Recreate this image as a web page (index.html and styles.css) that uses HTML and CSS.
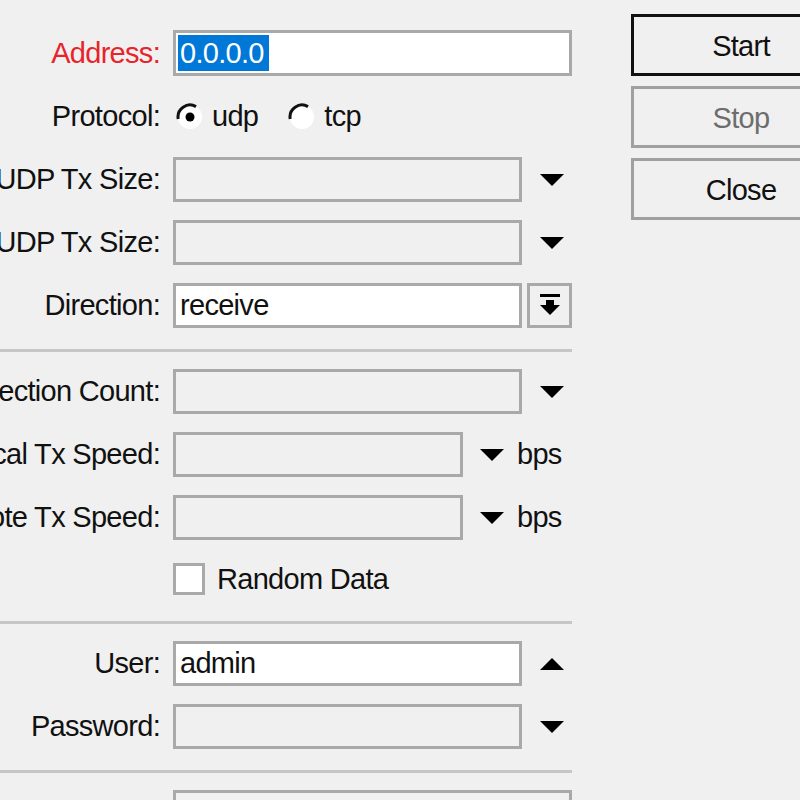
FILE: index.html
```html
<!DOCTYPE html>
<html>
<head>
<meta charset="utf-8">
<link rel="stylesheet" href="styles.css">
</head>
<body>
<div class="window">
  <div class="form">
    <div class="row row-first">
      <span class="lbl red">Address:</span>
      <div class="field white wide"><span class="sel">0.0.0.0</span></div>
    </div>
    <div class="row">
      <span class="lbl">Protocol:</span>
      <div class="radios">
        <span class="radio">
          <svg width="28" height="28" viewBox="0 0 28 28"><circle cx="14" cy="14" r="12" fill="#fff"/><path d="M2.2 16.1 A12 12 0 0 1 20 3.6" fill="none" stroke="#111" stroke-width="3"/><circle cx="14" cy="14" r="4.5" fill="#000"/></svg>
          udp
        </span>
        <span class="radio">
          <svg width="28" height="28" viewBox="0 0 28 28"><circle cx="14" cy="14" r="12" fill="#fff"/><path d="M2.2 16.1 A12 12 0 0 1 20 3.6" fill="none" stroke="#111" stroke-width="3"/></svg>
          tcp
        </span>
      </div>
    </div>
    <div class="row">
      <span class="lbl">Local UDP Tx Size:</span>
      <div class="field"></div>
      <span class="arrow down"></span>
    </div>
    <div class="row">
      <span class="lbl">Remote UDP Tx Size:</span>
      <div class="field"></div>
      <span class="arrow down"></span>
    </div>
    <div class="row">
      <span class="lbl">Direction:</span>
      <div class="field white">receive</div>
      <div class="dropbtn">
        <svg width="20" height="24" viewBox="0 0 20 24"><rect x="0" y="0" width="20" height="3" fill="#000"/><rect x="6" y="6" width="8" height="6" fill="#000"/><path d="M0 11 H20 L10 21 Z" fill="#000"/></svg>
      </div>
    </div>
    <div class="sep"></div>
    <div class="row">
      <span class="lbl">Connection Count:</span>
      <div class="field"></div>
      <span class="arrow down"></span>
    </div>
    <div class="row">
      <span class="lbl">Local Tx Speed:</span>
      <div class="field medium"></div>
      <span class="arrow down short"></span>
      <span class="unit">bps</span>
    </div>
    <div class="row">
      <span class="lbl">Remote Tx Speed:</span>
      <div class="field medium"></div>
      <span class="arrow down short"></span>
      <span class="unit">bps</span>
    </div>
    <div class="row row-check">
      <span class="lbl"></span>
      <span class="check"></span>
      <span class="check-text">Random Data</span>
    </div>
    <div class="sep"></div>
    <div class="row">
      <span class="lbl">User:</span>
      <div class="field white">admin</div>
      <span class="arrow up"></span>
    </div>
    <div class="row">
      <span class="lbl">Password:</span>
      <div class="field"></div>
      <span class="arrow down"></span>
    </div>
    <div class="sep"></div>
    <div class="row">
      <span class="lbl">Interval:</span>
      <div class="field wide"></div>
    </div>
  </div>
  <div class="buttons">
    <div class="btn default">Start</div>
    <div class="btn disabled">Stop</div>
    <div class="btn">Close</div>
  </div>
</div>
</body>
</html>
```

FILE: styles.css
```css
html, body {
  margin: 0;
  padding: 0;
  background: #f0f0f0;
  overflow: hidden;
  width: 800px;
  height: 800px;
}

body {
  font-family: "Liberation Sans", Arial, sans-serif;
  font-size: 29px;
  letter-spacing: -0.7px;
  color: #111;
}

.window {
  display: flex;
  gap: 59px;
}

.form {
  width: 572px;
  flex: none;
  padding-top: 30px;
  display: flex;
  flex-direction: column;
}

.row {
  display: flex;
  align-items: center;
  height: 45px;
  margin-top: 18px;
  flex: none;
}

.row-first {
  margin-top: 0;
  height: 46px;
}

.row-check {
  height: 42px;
}

.lbl {
  width: 160px;
  flex: none;
  margin-right: 13px;
  display: flex;
  justify-content: flex-end;
  white-space: nowrap;
}

.red {
  color: #e8242b;
}

.field {
  box-sizing: border-box;
  height: 45px;
  width: 349px;
  flex: none;
  border: 3px solid #a9a9a9;
  background: #f0f0f0;
  display: flex;
  align-items: center;
  padding-left: 4px;
  white-space: nowrap;
}

.row-first .field {
  height: 46px;
}

.white {
  background: #fff;
}

.wide {
  width: 399px;
}

.medium {
  width: 290px;
}

.sel {
  background: #0078d7;
  color: #fff;
  margin-left: -2px;
  padding: 0 5px 0 2px;
  height: 36px;
  line-height: 36px;
}

.radios {
  display: flex;
  align-items: center;
  gap: 30px;
  margin-left: 3px;
}

.radio {
  display: flex;
  align-items: center;
  gap: 8px;
}

.radio svg {
  display: block;
}

.arrow {
  width: 0;
  height: 0;
  margin-left: 18px;
  border-left: 12.5px solid transparent;
  border-right: 12.5px solid transparent;
}

.arrow.short {
  margin-left: 17px;
}

.down {
  border-top: 12px solid #000;
}

.up {
  border-bottom: 12px solid #000;
}

.unit {
  margin-left: 13px;
}

.dropbtn {
  box-sizing: border-box;
  width: 45px;
  height: 45px;
  margin-left: 5px;
  border: 3px solid #a9a9a9;
  background: #f0f0f0;
  display: flex;
  align-items: center;
  justify-content: center;
}

.dropbtn svg {
  display: block;
}

.sep {
  height: 3px;
  width: 572px;
  background: #c6c6c6;
  margin-top: 21px;
  flex: none;
}

.sep + .row {
  margin-top: 17px;
}

.check {
  box-sizing: border-box;
  width: 32px;
  height: 32px;
  border: 3px solid #a9a9a9;
  background: #fff;
  flex: none;
}

.check-text {
  margin-left: 12px;
}

.buttons {
  padding-top: 14px;
  display: flex;
  flex-direction: column;
  gap: 10px;
  flex: none;
}

.btn {
  box-sizing: border-box;
  width: 220px;
  height: 62px;
  border: 3px solid #a0a0a0;
  background: #f0f0f0;
  display: flex;
  align-items: center;
  justify-content: center;
  padding-top: 2px;
}

.btn.default {
  border-color: #111;
}

.btn.disabled {
  color: #6d6d6d;
}
```
